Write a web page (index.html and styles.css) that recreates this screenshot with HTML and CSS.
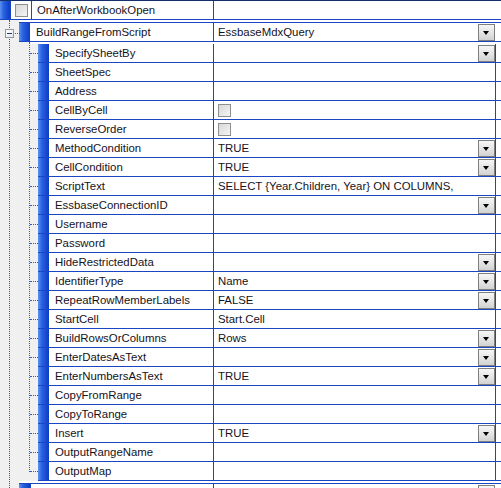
FILE: index.html
```html
<!DOCTYPE html>
<html>
<head>
<meta charset="utf-8">
<link rel="stylesheet" href="styles.css">
</head>
<body>
<div class="grid">
  <div class="row-top">
    <div class="mk mk0"></div>
    <div class="chk-cell"><span class="chk"></span></div>
    <div class="name">OnAfterWorkbookOpen</div>
    <div class="value"></div>
  </div>
  <div class="tree">
    <div class="gut0"><div class="expander"></div></div>
    <div class="col">
      <div class="row-l1">
        <div class="mk"></div>
        <div class="name">BuildRangeFromScript</div>
        <div class="value">EssbaseMdxQuery<span class="dd"></span></div>
      </div>
      <div class="children">
        <div class="gut1"></div>
        <div class="rows">
          <div class="row"><div class="stub"></div><div class="box"><div class="mk"></div><div class="name">SpecifySheetBy</div><div class="value"><span class="dd"></span></div><div class="fill"></div></div></div>
          <div class="row"><div class="stub"></div><div class="box"><div class="mk"></div><div class="name">SheetSpec</div><div class="value"></div><div class="fill"></div></div></div>
          <div class="row"><div class="stub"></div><div class="box"><div class="mk"></div><div class="name">Address</div><div class="value"></div><div class="fill"></div></div></div>
          <div class="row"><div class="stub"></div><div class="box"><div class="mk"></div><div class="name">CellByCell</div><div class="value"><span class="chk"></span></div><div class="fill"></div></div></div>
          <div class="row"><div class="stub"></div><div class="box"><div class="mk"></div><div class="name">ReverseOrder</div><div class="value"><span class="chk"></span></div><div class="fill"></div></div></div>
          <div class="row"><div class="stub"></div><div class="box"><div class="mk"></div><div class="name">MethodCondition</div><div class="value">TRUE<span class="dd"></span></div><div class="fill"></div></div></div>
          <div class="row"><div class="stub"></div><div class="box"><div class="mk"></div><div class="name">CellCondition</div><div class="value">TRUE<span class="dd"></span></div><div class="fill"></div></div></div>
          <div class="row"><div class="stub"></div><div class="box"><div class="mk"></div><div class="name">ScriptText</div><div class="value">SELECT {Year.Children, Year} ON COLUMNS,</div><div class="fill"></div></div></div>
          <div class="row"><div class="stub"></div><div class="box"><div class="mk"></div><div class="name">EssbaseConnectionID</div><div class="value"><span class="dd"></span></div><div class="fill"></div></div></div>
          <div class="row"><div class="stub"></div><div class="box"><div class="mk"></div><div class="name">Username</div><div class="value"></div><div class="fill"></div></div></div>
          <div class="row"><div class="stub"></div><div class="box"><div class="mk"></div><div class="name">Password</div><div class="value"></div><div class="fill"></div></div></div>
          <div class="row"><div class="stub"></div><div class="box"><div class="mk"></div><div class="name">HideRestrictedData</div><div class="value"><span class="dd"></span></div><div class="fill"></div></div></div>
          <div class="row"><div class="stub"></div><div class="box"><div class="mk"></div><div class="name">IdentifierType</div><div class="value">Name<span class="dd"></span></div><div class="fill"></div></div></div>
          <div class="row"><div class="stub"></div><div class="box"><div class="mk"></div><div class="name">RepeatRowMemberLabels</div><div class="value">FALSE<span class="dd"></span></div><div class="fill"></div></div></div>
          <div class="row"><div class="stub"></div><div class="box"><div class="mk"></div><div class="name">StartCell</div><div class="value">Start.Cell</div><div class="fill"></div></div></div>
          <div class="row"><div class="stub"></div><div class="box"><div class="mk"></div><div class="name">BuildRowsOrColumns</div><div class="value">Rows<span class="dd"></span></div><div class="fill"></div></div></div>
          <div class="row"><div class="stub"></div><div class="box"><div class="mk"></div><div class="name">EnterDatesAsText</div><div class="value"><span class="dd"></span></div><div class="fill"></div></div></div>
          <div class="row"><div class="stub"></div><div class="box"><div class="mk"></div><div class="name">EnterNumbersAsText</div><div class="value">TRUE<span class="dd"></span></div><div class="fill"></div></div></div>
          <div class="row"><div class="stub"></div><div class="box"><div class="mk"></div><div class="name">CopyFromRange</div><div class="value"></div><div class="fill"></div></div></div>
          <div class="row"><div class="stub"></div><div class="box"><div class="mk"></div><div class="name">CopyToRange</div><div class="value"></div><div class="fill"></div></div></div>
          <div class="row"><div class="stub"></div><div class="box"><div class="mk"></div><div class="name">Insert</div><div class="value">TRUE<span class="dd"></span></div><div class="fill"></div></div></div>
          <div class="row"><div class="stub"></div><div class="box"><div class="mk"></div><div class="name">OutputRangeName</div><div class="value"></div><div class="fill"></div></div></div>
          <div class="row"><div class="stub"></div><div class="box"><div class="mk"></div><div class="name">OutputMap</div><div class="value"></div><div class="fill"></div></div></div>
        </div>
      </div>
      <div class="row-l1 next">
        <div class="mk"></div>
        <div class="name"></div>
        <div class="value"><span class="dd"></span></div>
      </div>
    </div>
  </div>
</div>
</body>
</html>
```

FILE: styles.css
```css
html, body {
  margin: 0;
  padding: 0;
  background: #ffffff;
  overflow: hidden;
}

body {
  font-family: "Liberation Sans", Arial, sans-serif;
  font-size: 11.4px;
  color: #15121c;
}

.grid {
  width: 501px;
  height: 488px;
  overflow: hidden;
  background: #ffffff;
}

.mk {
  width: 11px;
  flex: none;
  background: linear-gradient(to right, #5a92f2 0%, #2a62e0 35%, #0c3cc6 100%);
}

/* ---- top row ---- */
.row-top {
  display: flex;
  height: 18px;
  border-top: 1px solid #13306a;
  border-bottom: 1px solid #1a46c6;
}

.row-top .mk0 {
  width: 10px;
}

.chk-cell {
  width: 20px;
  flex: none;
  border-left: 1px solid #1a46c6;
  display: flex;
  align-items: center;
  justify-content: center;
}

.chk {
  display: inline-block;
  width: 11px;
  height: 11px;
  border: 1px solid #8e8f8f;
  background: linear-gradient(135deg, #d8d8d8 0%, #f4f4f4 100%);
  box-sizing: content-box;
}

.row-top .name {
  width: 176px;
  flex: none;
  border-left: 1px solid #1a46c6;
  padding-left: 5px;
  line-height: 19px;
}

.value {
  flex: 1;
  display: flex;
  align-items: center;
  border-left: 1px solid #1a46c6;
  padding-left: 4px;
  white-space: nowrap;
  overflow: hidden;
}

/* ---- tree ---- */
.tree {
  display: flex;
  padding-top: 2px;
}

.gut0 {
  width: 19px;
  flex: none;
  background: #f0f0f0;
  position: relative;
  margin-top: -2px;
  padding-top: 2px;
}

.gut0::before {
  content: "";
  position: absolute;
  left: 9px;
  top: 0;
  bottom: 0;
  border-left: 1px dotted #2b55d6;
}

.expander {
  position: relative;
  z-index: 1;
  width: 7px;
  height: 7px;
  margin: 7px 0 0 5px;
  border: 1px solid #8f97a3;
  background: linear-gradient(135deg, #ffffff 0%, #e6e6e6 100%);
}

.expander::before {
  content: "";
  position: absolute;
  left: 1px;
  top: 3px;
  width: 5px;
  height: 1px;
  background: #1f3a7a;
}

.expander::after {
  content: "";
  position: absolute;
  left: 9px;
  top: 3px;
  width: 5px;
  border-top: 1px dotted #2b55d6;
}

.col {
  flex: 1;
  display: flex;
  flex-direction: column;
}

.row-l1 {
  display: flex;
  height: 18px;
  border-top: 1px solid #1a46c6;
  border-bottom: 1px solid #1a46c6;
}

.row-l1 .name {
  width: 177px;
  flex: none;
  padding-left: 6px;
  line-height: 19px;
}

.row-l1 .value {
  padding-right: 6px;
}

.row-l1.next {
  border-bottom: none;
  margin-top: 2px;
}

.row-l1.next .name {
  border-left: 1px solid #1a46c6;
  width: 176px;
}

.dd {
  margin-left: auto;
  width: 15px;
  height: 15px;
  flex: none;
  border: 1px solid #7f7f7f;
  background: linear-gradient(to bottom, #f6f6f6 0%, #e4e4e4 55%, #d2d2d2 100%);
  position: relative;
}

.dd::after {
  content: "";
  position: absolute;
  left: 4px;
  top: 6px;
  border-left: 3.5px solid transparent;
  border-right: 3.5px solid transparent;
  border-top: 4px solid #000000;
}

.children {
  display: flex;
}

.gut1 {
  width: 11px;
  flex: none;
  background: #f0f0f0;
  position: relative;
}

.gut1::before {
  content: "";
  position: absolute;
  left: 10px;
  top: 0;
  bottom: 9px;
  border-left: 1px dotted #2b55d6;
}

.rows {
  flex: 1;
  display: flex;
  flex-direction: column;
  padding-top: 2px;
  background: #ffffff;
}

.row {
  display: flex;
  height: 19px;
}

.stub {
  width: 8px;
  flex: none;
  background: #f0f0f0;
  display: flex;
  align-items: center;
}

.stub::before {
  content: "";
  width: 8px;
  border-top: 1px dotted #2b55d6;
  margin-top: -1px;
}

.box {
  flex: 1;
  display: flex;
  border-bottom: 1px solid #1a46c6;
}

.box .name {
  width: 158px;
  flex: none;
  padding-left: 6px;
  line-height: 19px;
}

.box .value {
  border-right: 1px solid #1a46c6;
}

.fill {
  width: 5px;
  flex: none;
}
```
